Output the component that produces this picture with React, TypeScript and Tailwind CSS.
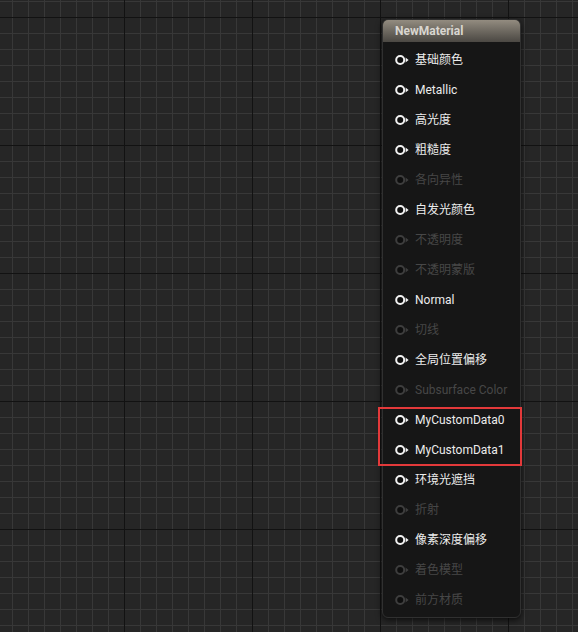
const PINS: { label: string; on: boolean }[] = [
  { label: "基础颜色", on: true },
  { label: "Metallic", on: true },
  { label: "高光度", on: true },
  { label: "粗糙度", on: true },
  { label: "各向异性", on: false },
  { label: "自发光颜色", on: true },
  { label: "不透明度", on: false },
  { label: "不透明蒙版", on: false },
  { label: "Normal", on: true },
  { label: "切线", on: false },
  { label: "全局位置偏移", on: true },
  { label: "Subsurface Color", on: false },
  { label: "MyCustomData0", on: true },
  { label: "MyCustomData1", on: true },
  { label: "环境光遮挡", on: true },
  { label: "折射", on: false },
  { label: "像素深度偏移", on: true },
  { label: "着色模型", on: false },
  { label: "前方材质", on: false },
];

function PinIcon({ on }: { on: boolean }) {
  const c = on ? "#f2f2f2" : "#3e3e3e";
  return (
    <svg width="15" height="10" viewBox="0 0 15 10" className="shrink-0">
      <circle cx="5.2" cy="5" r="4" fill="#0e0e0e" stroke={c} strokeWidth="2" />
      <polygon points="10.6,2.6 13.6,5 10.6,7.4" fill={c} />
    </svg>
  );
}

export default function App() {
  return (
    <div
      className="relative h-[632px] w-full overflow-hidden bg-[#262626] bg-[image:linear-gradient(to_right,#121212_1px,transparent_1px),linear-gradient(to_bottom,#121212_1px,transparent_1px),linear-gradient(to_right,#383838_1px,transparent_1px),linear-gradient(to_bottom,#383838_1px,transparent_1px)] bg-[size:128px_128px,128px_128px,16px_16px,16px_16px] bg-[position:124px_17px,124px_17px,12px_1px,12px_1px]"
      style={{ fontFamily: 'Roboto, "Noto Sans CJK SC", sans-serif' }}
    >
      {/* material node */}
      <div className="absolute left-[382px] top-[19px] w-[139px] rounded-[6px] border border-[#303030] bg-[#161616] shadow-[0_2px_6px_rgba(0,0,0,0.7)]">
        <div className="flex h-[22px] items-center rounded-t-[5px] bg-gradient-to-b from-[#938c80] to-[#4b4843] pl-[12px] text-[12px] font-bold text-[#d9d6d0]">
          NewMaterial
        </div>
        <div className="flex flex-col pb-[2px] pt-[3px]">
          {PINS.map((p) => (
            <div key={p.label} className="flex h-[30px] items-center gap-[5px] pl-[12px]">
              <PinIcon on={p.on} />
              <span
                className={`text-[12px] leading-none ${p.on ? "text-[#ececec]" : "text-[#474747]"}`}
              >
                {p.label}
              </span>
            </div>
          ))}
        </div>
        {/* highlight box */}
        <div className="pointer-events-none absolute left-[-5px] top-[387px] h-[59px] w-[144px] border-2 border-[#e3393a]" />
      </div>
    </div>
  );
}
